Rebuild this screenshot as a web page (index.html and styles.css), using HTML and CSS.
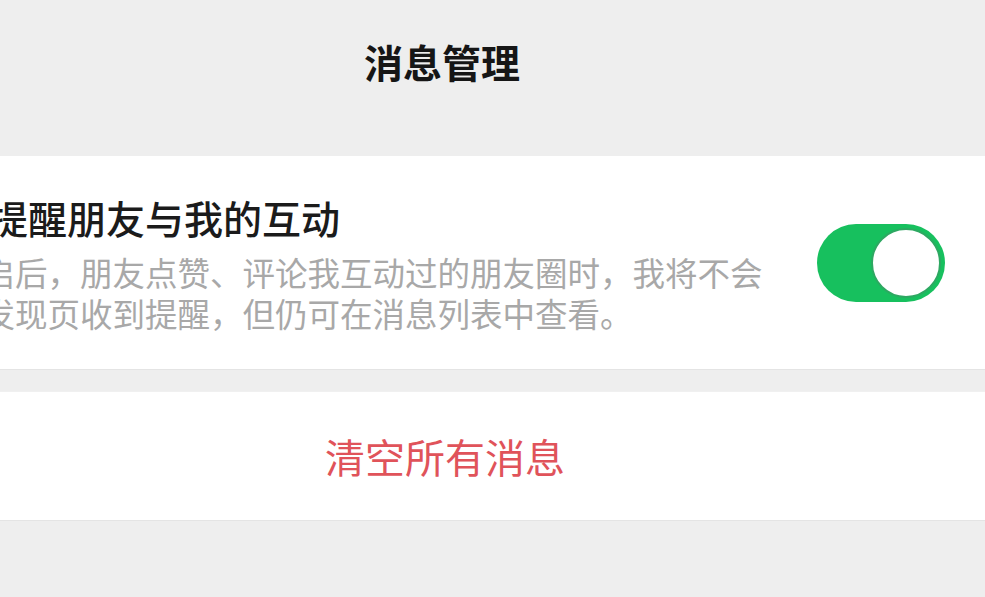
FILE: index.html
```html
<!DOCTYPE html>
<html lang="zh-CN">
<head>
<meta charset="utf-8">
<title>消息管理</title>
<link rel="stylesheet" href="styles.css">
</head>
<body>
<div class="page">
  <header class="header">
    <h1 class="header-title">消息管理</h1>
  </header>
  <section class="card card-setting">
    <div class="setting-text">
      <div class="setting-title">不提醒朋友与我的互动</div>
      <div class="setting-desc">开启后，朋友点赞、评论我互动过的朋友圈时，我将不会在发现页收到提醒，但仍可在消息列表中查看。</div>
    </div>
    <div class="switch" role="switch" aria-checked="true">
      <div class="switch-knob"></div>
    </div>
  </section>
  <section class="card card-action">
    <div class="action-text">清空所有消息</div>
  </section>
</div>
</body>
</html>
```

FILE: styles.css
```css
html, body {
  margin: 0;
  padding: 0;
  background: #eeeeee;
  height: 100%;
}

.page {
  width: 985px;
  height: 597px;
  overflow: hidden;
  font-family: "Noto Sans CJK SC", "Noto Sans", sans-serif;
  background: #eeeeee;
}

.header {
  height: 156px;
  box-sizing: border-box;
  padding-top: 41px;
  padding-left: 364px;
}

.header-title {
  margin: 0;
  font-size: 39px;
  line-height: 40px;
  font-weight: 700;
  color: #161616;
  letter-spacing: 0;
}

.card {
  background: #ffffff;
}

.card-setting {
  height: 213px;
  border-bottom: 1px solid #e4e4e4;
  display: flex;
  align-items: center;
  justify-content: space-between;
  padding-right: 40px;
}

.setting-text {
  margin-left: -50px;
  width: 816px;
  flex: none;
}

.setting-title {
  font-size: 39px;
  line-height: 48px;
  font-weight: 500;
  color: #1b1b1b;
  margin-bottom: 10px;
}

.setting-desc {
  font-size: 32.5px;
  line-height: 41px;
  color: #a8a8a8;
}

.switch {
  width: 128px;
  height: 78px;
  border-radius: 39px;
  background: #17c05e;
  flex: none;
  display: flex;
  align-items: center;
  justify-content: flex-end;
  box-sizing: border-box;
  padding-right: 4px;
}

.switch-knob {
  width: 66px;
  height: 66px;
  border-radius: 50%;
  background: #ffffff;
  border: 2px solid #2ea862;
}

.card-action {
  margin-top: 21px;
  height: 130px;
  border-top: 1px solid #f0f0f0;
  border-bottom: 1px solid #e4e4e4;
  box-sizing: border-box;
  display: flex;
  align-items: center;
  padding-left: 325px;
}

.action-text {
  font-size: 40px;
  line-height: 44px;
  color: #e0535a;
}
```
